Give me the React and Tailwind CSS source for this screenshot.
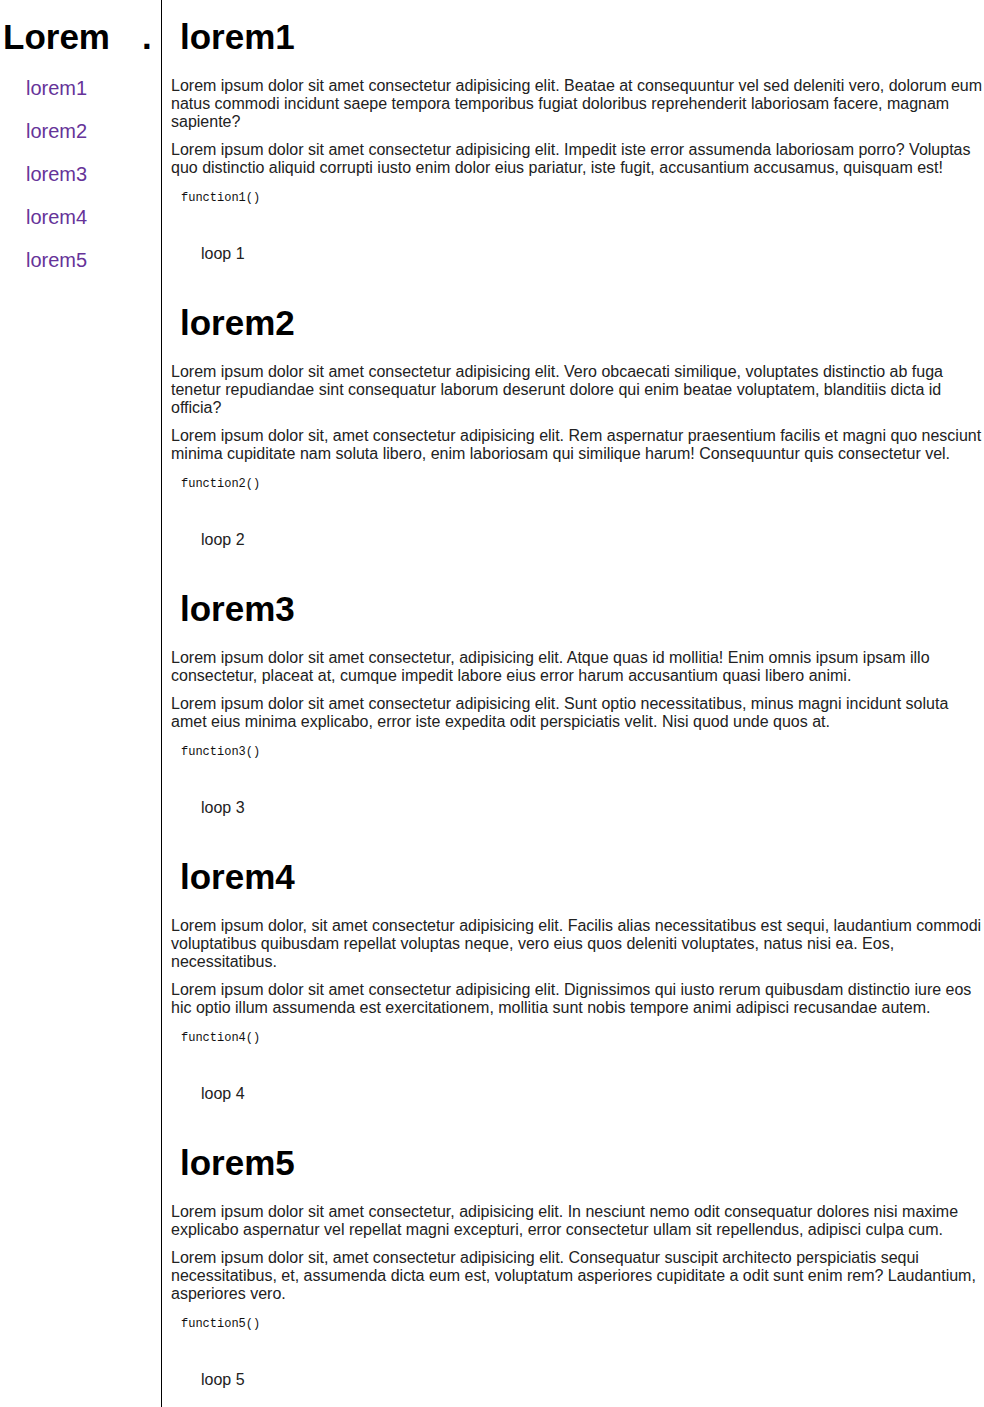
const sections = [
  {
    id: 1,
    paras: [
      "Lorem ipsum dolor sit amet consectetur adipisicing elit. Beatae at consequuntur vel sed deleniti vero, dolorum eum natus commodi incidunt saepe tempora temporibus fugiat doloribus reprehenderit laboriosam facere, magnam sapiente?",
      "Lorem ipsum dolor sit amet consectetur adipisicing elit. Impedit iste error assumenda laboriosam porro? Voluptas quo distinctio aliquid corrupti iusto enim dolor eius pariatur, iste fugit, accusantium accusamus, quisquam est!",
    ],
  },
  {
    id: 2,
    paras: [
      "Lorem ipsum dolor sit amet consectetur adipisicing elit. Vero obcaecati similique, voluptates distinctio ab fuga tenetur repudiandae sint consequatur laborum deserunt dolore qui enim beatae voluptatem, blanditiis dicta id officia?",
      "Lorem ipsum dolor sit, amet consectetur adipisicing elit. Rem aspernatur praesentium facilis et magni quo nesciunt minima cupiditate nam soluta libero, enim laboriosam qui similique harum! Consequuntur quis consectetur vel.",
    ],
  },
  {
    id: 3,
    paras: [
      "Lorem ipsum dolor sit amet consectetur, adipisicing elit. Atque quas id mollitia! Enim omnis ipsum ipsam illo consectetur, placeat at, cumque impedit labore eius error harum accusantium quasi libero animi.",
      "Lorem ipsum dolor sit amet consectetur adipisicing elit. Sunt optio necessitatibus, minus magni incidunt soluta amet eius minima explicabo, error iste expedita odit perspiciatis velit. Nisi quod unde quos at.",
    ],
  },
  {
    id: 4,
    paras: [
      "Lorem ipsum dolor, sit amet consectetur adipisicing elit. Facilis alias necessitatibus est sequi, laudantium commodi voluptatibus quibusdam repellat voluptas neque, vero eius quos deleniti voluptates, natus nisi ea. Eos, necessitatibus.",
      "Lorem ipsum dolor sit amet consectetur adipisicing elit. Dignissimos qui iusto rerum quibusdam distinctio iure eos hic optio illum assumenda est exercitationem, mollitia sunt nobis tempore animi adipisci recusandae autem.",
    ],
  },
  {
    id: 5,
    paras: [
      "Lorem ipsum dolor sit amet consectetur, adipisicing elit. In nesciunt nemo odit consequatur dolores nisi maxime explicabo aspernatur vel repellat magni excepturi, error consectetur ullam sit repellendus, adipisci culpa cum.",
      "Lorem ipsum dolor sit, amet consectetur adipisicing elit. Consequatur suscipit architecto perspiciatis sequi necessitatibus, et, assumenda dicta eum est, voluptatum asperiores cupiditate a odit sunt enim rem? Laudantium, asperiores vero.",
    ],
  },
];

const Section = ({ s }) => (
  <section className="pb-[40px]">
    <h2 className="pl-[9px] text-[35px] font-bold leading-[40px] text-black">lorem{s.id}</h2>
    <p className="mt-[20px] text-[16px] leading-[18px] text-[#222]">{s.paras[0]}</p>
    <p className="mt-[10px] text-[16px] leading-[18px] text-[#222]">{s.paras[1]}</p>
    <div className="mt-[13px] pl-[10px] font-['Liberation_Mono',monospace] text-[12px] leading-[16px] text-[#111]">
      function{s.id}()
    </div>
    <div className="mt-[39px] pl-[30px] text-[16px] leading-[18px] text-[#222]">loop {s.id}</div>
  </section>
);

export default function App() {
  return (
    <div className="flex min-h-screen bg-white font-['Liberation_Sans',Arial,sans-serif]">
      <aside className="w-[162px] shrink-0 border-r border-black pt-[17px]">
        <div className="flex items-baseline pl-[3px] text-[35px] font-bold leading-[40px] text-black">
          <span>Lorem</span>
          <span className="ml-[32px]">.</span>
        </div>
        <nav className="mt-[20px] flex flex-col gap-[20px] pl-[26px]">
          {sections.map((s) => (
            <a key={s.id} href={`#lorem${s.id}`} className="text-[20px] leading-[23px] text-[#663399]">
              lorem{s.id}
            </a>
          ))}
        </nav>
      </aside>
      <main className="flex-1 pl-[9px] pt-[17px]">
        {sections.map((s) => (
          <Section key={s.id} s={s} />
        ))}
      </main>
    </div>
  );
}
